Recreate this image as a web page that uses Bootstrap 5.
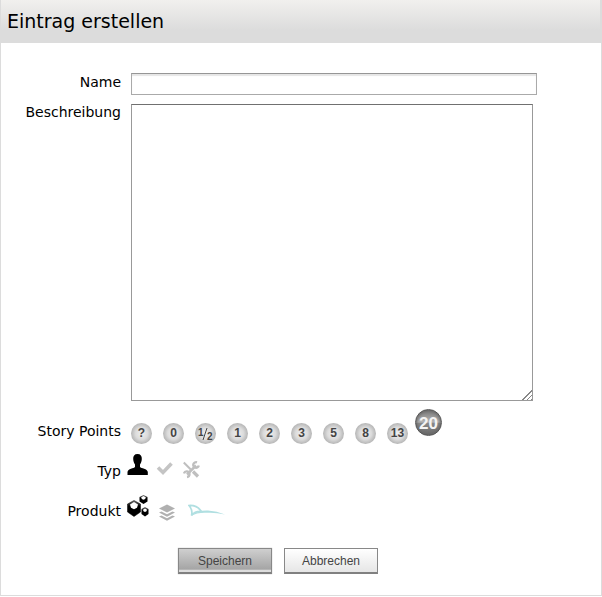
<!DOCTYPE html>
<html lang="de">
<head>
<meta charset="utf-8">
<meta name="viewport" content="width=device-width, initial-scale=1">
<title>Eintrag erstellen</title>
<link href="https://cdn.jsdelivr.net/npm/bootstrap@5.3.0/dist/css/bootstrap.min.css" rel="stylesheet">
<style>
body{font-family:"DejaVu Sans",Verdana,sans-serif;font-size:14px;line-height:18px;color:#000;background:#fff}
.panel{border:1px solid #dcdcdc;border-top:0;box-shadow:0 1px 0 #eee}
.panel-head{height:43px;padding:0 6px;border:solid #dcdcdc;border-width:0 1px 0 0;background:linear-gradient(#f1f0ee,#dcdcdc 70%)}
.panel-head h1{font-size:19px;line-height:42px}
.entry-form{padding:30px 64px 21px 0}
.cap{flex:0 0 120px;text-align:right}
.field{margin-left:10px}
.icons{margin-left:6px}
.name-row{margin-bottom:9px}
.desc-row{margin-bottom:8px;padding-right:4px}
.desc-row .cap{margin-top:-1px}
.points-row{margin-bottom:9px}
.points-row .cap{padding-top:13px}
.type-row{height:41px}
.type-row .cap{padding-top:9px}
.product-row{height:54px}
.product-row .cap{padding-top:8px}
.text-in{height:22px;padding:0 4px;border:1px solid #aaa;border-top-color:#969696;border-radius:0;box-shadow:inset 0 2px 1px #e6e6e6;font-size:14px}
.text-area{display:block;height:297px;padding:2px 4px;border:1px solid #999;border-top-color:#707070;border-radius:0;font-size:14px;resize:both}
.text-area::-webkit-resizer{background:linear-gradient(135deg,#fff 58%,transparent 58%),repeating-linear-gradient(135deg,#fff 0 2px,#888 2px 3px)}
.points{gap:11px}
.point{width:21px;height:21px;margin-top:14px;border-radius:50%;background:radial-gradient(circle at 50% 50%,#efefef 0,#dcdcdc 40%,#b0b0b0 75%);color:#444;font:bold 12px/21px "Liberation Sans",Arial,sans-serif;text-align:center;cursor:pointer}
.point svg{display:block}
.btn-check:checked+.point{width:27px;height:27px;margin:0 0 0 -4px;border:1px solid #555;background:linear-gradient(#777 0,#b5b5b5 48%,#888 54%,#6a6a6a 100%);box-shadow:inset 0 0 3px 1px #666;color:#f4f4f4;font-size:17px;line-height:28px}
.pick{cursor:pointer}
.pick svg{display:block}
.actions{padding-left:177px;gap:12px}
.act{width:94px;height:26px;padding:0;border:1px solid #888;border-bottom:2px solid #808080;border-radius:0;font:12px/22px "Liberation Sans",Arial,sans-serif;color:#444;background:linear-gradient(#fff,#e6e6e6)}
.act-save{background:linear-gradient(#cfcfcf,#a5a5a5 88%,#ddd 92%);box-shadow:0 0 1px #aaa}
</style>
</head>
<body>
<main class="panel">
<header class="panel-head"><h1 class="m-0 fw-normal">Eintrag erstellen</h1></header>
<form class="entry-form">
  <div class="name-row d-flex">
    <label class="cap" for="name">Name</label>
    <div class="field flex-grow-1"><input class="text-in form-control" type="text" id="name"></div>
  </div>
  <div class="desc-row d-flex">
    <label class="cap" for="desc">Beschreibung</label>
    <div class="field flex-grow-1"><textarea class="text-area form-control" id="desc"></textarea></div>
  </div>
  <div class="points-row d-flex" role="radiogroup" aria-labelledby="lp">
    <div class="cap" id="lp">Story Points</div>
    <div class="field points d-flex align-items-start">
      <div><input class="btn-check" type="radio" name="points" id="pq"><label class="point d-block" for="pq">?</label></div>
      <div><input class="btn-check" type="radio" name="points" id="p0"><label class="point d-block" for="p0">0</label></div>
      <div><input class="btn-check" type="radio" name="points" id="ph"><label class="point d-block" for="ph" aria-label="½"><svg width="21" height="21" fill="#444" font-size="10"><text x="3" y="13">1</text><path d="M8 17 12 5" stroke="#444"/><text x="12" y="17">2</text></svg></label></div>
      <div><input class="btn-check" type="radio" name="points" id="p1"><label class="point d-block" for="p1">1</label></div>
      <div><input class="btn-check" type="radio" name="points" id="p2"><label class="point d-block" for="p2">2</label></div>
      <div><input class="btn-check" type="radio" name="points" id="p3"><label class="point d-block" for="p3">3</label></div>
      <div><input class="btn-check" type="radio" name="points" id="p5"><label class="point d-block" for="p5">5</label></div>
      <div><input class="btn-check" type="radio" name="points" id="p8"><label class="point d-block" for="p8">8</label></div>
      <div><input class="btn-check" type="radio" name="points" id="p13"><label class="point d-block" for="p13">13</label></div>
      <div><input class="btn-check" type="radio" name="points" id="p20" checked><label class="point d-block" for="p20">20</label></div>
    </div>
  </div>
  <div class="type-row d-flex" role="radiogroup" aria-labelledby="lt">
    <div class="cap" id="lt">Typ</div>
    <div class="icons d-flex align-items-start">
      <div><input class="btn-check" type="radio" name="type" id="t1" checked><label class="pick" for="t1" aria-label="Benutzer"><svg width="28" height="28" viewBox="0 0 28 28"><path d="M10.500 1C13.600 1 15 3 14.800 6C14.700 8.500 13.800 10.500 13 11.500V14C14 15.500 20.500 15.700 20.800 19V22H.5V19C.8 15.700 7 15.500 8 14V11.500C7.200 10.500 6.300 8.500 6.200 6C6 3 7.400 1 10.500 1Z"/></svg></label></div>
      <div><input class="btn-check" type="radio" name="type" id="t2"><label class="pick" for="t2" aria-label="Aufgabe"><svg width="28" height="28" viewBox="0 0 28 28"><path d="M3 14.500 8 19.500 16.500 10.500" fill="none" stroke="#c4c4c4" stroke-width="3.600"/></svg></label></div>
      <div><input class="btn-check" type="radio" name="type" id="t3"><label class="pick" for="t3" aria-label="Werkzeug"><svg width="28" height="28" viewBox="0 0 28 28" fill="none" stroke="#bfbfbf"><path d="m.8 9.500 7 7" stroke-width="2"/><path d="m10 18.500 5 5" stroke-width="3.200"/><path d="M4 21.500 13 12.500" stroke-width="2.500"/><path d="M14 9.300A2.800 2.800 0 1 0 15.800 12.500M1 20.500A2.800 2.800 0 1 1 4 24" stroke-width="2.300"/></svg></label></div>
    </div>
  </div>
  <div class="product-row d-flex" role="radiogroup" aria-labelledby="lr">
    <div class="cap" id="lr">Produkt</div>
    <div class="icons d-flex align-items-start">
      <div><input class="btn-check" type="radio" name="product" id="r1" checked><label class="pick" for="r1" aria-label="Module"><svg width="30" height="30" viewBox="0 0 30 30"><defs><linearGradient id="g" x2="0" y2="1"><stop stop-color="#777"/><stop offset=".35"/></linearGradient></defs><path d="M7 6.500 13.500 10V18L7 22.500.5 18V10Z" fill="url(#g)" stroke="#000" stroke-width=".5"/><path d="m7 8 4 2.500-1 3.300L7 15.300 4 13.800 3 10.500Z" fill="#fff"/><path d="m16.500 1 4 2v4.500l-4 2.500-4-2.500V3Z" fill="url(#g)"/><path d="m16.500 2 2.300 1.300-.6 1.700-1.700.8-1.700-.8-.6-1.700Z" fill="#fff"/><path d="m18 13 3.500 2v5L18 22.500 14.500 20v-5Z" fill="url(#g)"/><path d="m18 14.500 2 1.200-.5 1.600-1.500.7-1.500-.7-.5-1.600Z" fill="#fff"/></svg></label></div>
      <div><input class="btn-check" type="radio" name="product" id="r2"><label class="pick" for="r2" aria-label="Ebenen"><svg width="31" height="30" viewBox="0 0 31 30" fill="#b0b0b0"><path d="m10 10.500 8 4-8 4-8-4ZM2 18.500l2.500-1 5.500 2.700 5.500-2.700 2.500 1-8 4.200ZM2 22.500l2.500-1 5.500 2.700 5.500-2.700 2.500 1-8 4.200Z"/></svg></label></div>
      <div><input class="btn-check" type="radio" name="product" id="r3"><label class="pick" for="r3" aria-label="Hai"><svg width="40" height="30" viewBox="0 0 40 30" fill="none" stroke="#b0dfe1"><path d="M1 11.500Q9 11 13.500 17.500Q7 17 3.500 21.500Q5 16 1 11.500Z" stroke-width="1.700"/><path d="M2.500 22Q10 16 20 16.500Q29 17 37 20.500Q28 18.500 20 18.800Q10 18 2.500 22Z" fill="#b0dfe1" stroke="none"/></svg></label></div>
    </div>
  </div>
  <div class="actions d-flex">
    <button class="btn act act-save" type="submit">Speichern</button>
    <button class="btn act" type="button">Abbrechen</button>
  </div>
</form>
</main>
<script src="https://cdn.jsdelivr.net/npm/bootstrap@5.3.0/dist/js/bootstrap.bundle.min.js"></script>
</body>
</html>
